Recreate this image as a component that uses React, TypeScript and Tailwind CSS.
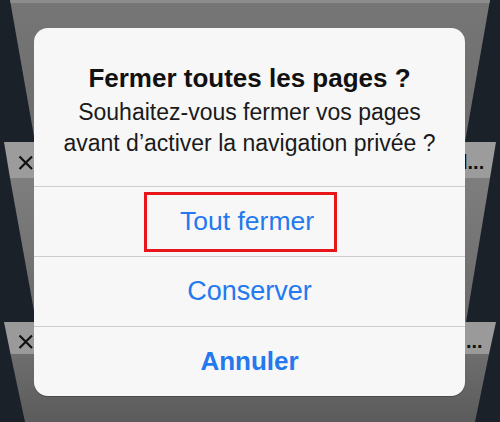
import React from 'react'

const font = { fontFamily: '"Liberation Sans", Arial, sans-serif' }

function TabsBackdrop() {
  return (
    <svg className="absolute inset-0" width="500" height="422" viewBox="0 0 500 422">
      <defs>
        <linearGradient id="card1" x1="0" y1="0" x2="0" y2="1">
          <stop offset="0" stopColor="#767676" />
          <stop offset="1" stopColor="#6c6c6c" />
        </linearGradient>
        <linearGradient id="card2" x1="0" y1="0" x2="0" y2="1">
          <stop offset="0" stopColor="#7e7e7e" />
          <stop offset="1" stopColor="#6a6a6a" />
        </linearGradient>
        <linearGradient id="card3" x1="0" y1="0" x2="0" y2="1">
          <stop offset="0" stopColor="#6e6e6e" />
          <stop offset="1" stopColor="#5b5b5b" />
        </linearGradient>
      </defs>

      {/* first tab */}
      <polygon points="10,0 490,0 465,142 35,142" fill="url(#card1)" />
      <polygon points="10,0 490,0 489.5,3 10.5,3" fill="#8c8c8c" />

      {/* second tab */}
      <polygon points="4,142 496,142 490,178 10,178" fill="#9c9c9c" />
      <polygon points="10,178 490,178 466,322 36,322" fill="url(#card2)" />
      <path d="M19.5 156.5 L32 169 M32 156.5 L19.5 169" stroke="#111" strokeWidth="2.2" />
      <text x="462" y="169" fontSize="20" fontWeight="bold" fill="#111" style={font}>
        l...
      </text>

      {/* third tab */}
      <polygon points="4,322 496,322 489,354 10.5,354" fill="#9a9a9a" />
      <polygon points="10.5,354 489,354 475,422 25,422" fill="url(#card3)" />
      <path d="M19.5 335.5 L32 348 M32 335.5 L19.5 348" stroke="#111" strokeWidth="2.2" />
      <text x="466" y="348" fontSize="20" fontWeight="bold" fill="#111" style={font}>
        ...
      </text>
    </svg>
  )
}

export default function App() {
  return (
    <div className="relative h-[422px] w-[500px] overflow-hidden bg-[#1b2128] pt-[28px]" style={font}>
      <TabsBackdrop />

      <div className="relative ml-[34px] w-[431px] overflow-hidden rounded-[14px] bg-[#f7f7f7] shadow-[0_1px_0_rgba(0,0,0,0.25)]">
        <div className="px-4 pt-[34px] pb-[27px] text-center">
          <h2 className="text-[26px] leading-[32px] font-bold text-[#111]">Fermer toutes les pages ?</h2>
          <p className="mt-[3px] text-[23px] leading-[31px] text-[#1a1a1a]">
            Souhaitez-vous fermer vos pages
            <br />
            avant d’activer la navigation privée ?
          </p>
        </div>

        <div className="flex h-[70px] items-center justify-center border-t border-[#cdcdcd]">
          <div className="mr-[18px] flex h-[60px] w-[193px] items-center border-[3px] border-[#e8151b] pl-[33px]">
            <span className="text-[26.5px] text-[#2479ee] whitespace-nowrap">Tout fermer</span>
          </div>
        </div>

        <button className="flex h-[70px] w-full items-center justify-center border-t border-[#cdcdcd] text-[27px] text-[#2479ee]">
          Conserver
        </button>

        <button className="flex h-[70px] w-full items-center justify-center border-t border-[#cdcdcd] text-[26px] font-bold text-[#2479ee]">
          Annuler
        </button>
      </div>
    </div>
  )
}
